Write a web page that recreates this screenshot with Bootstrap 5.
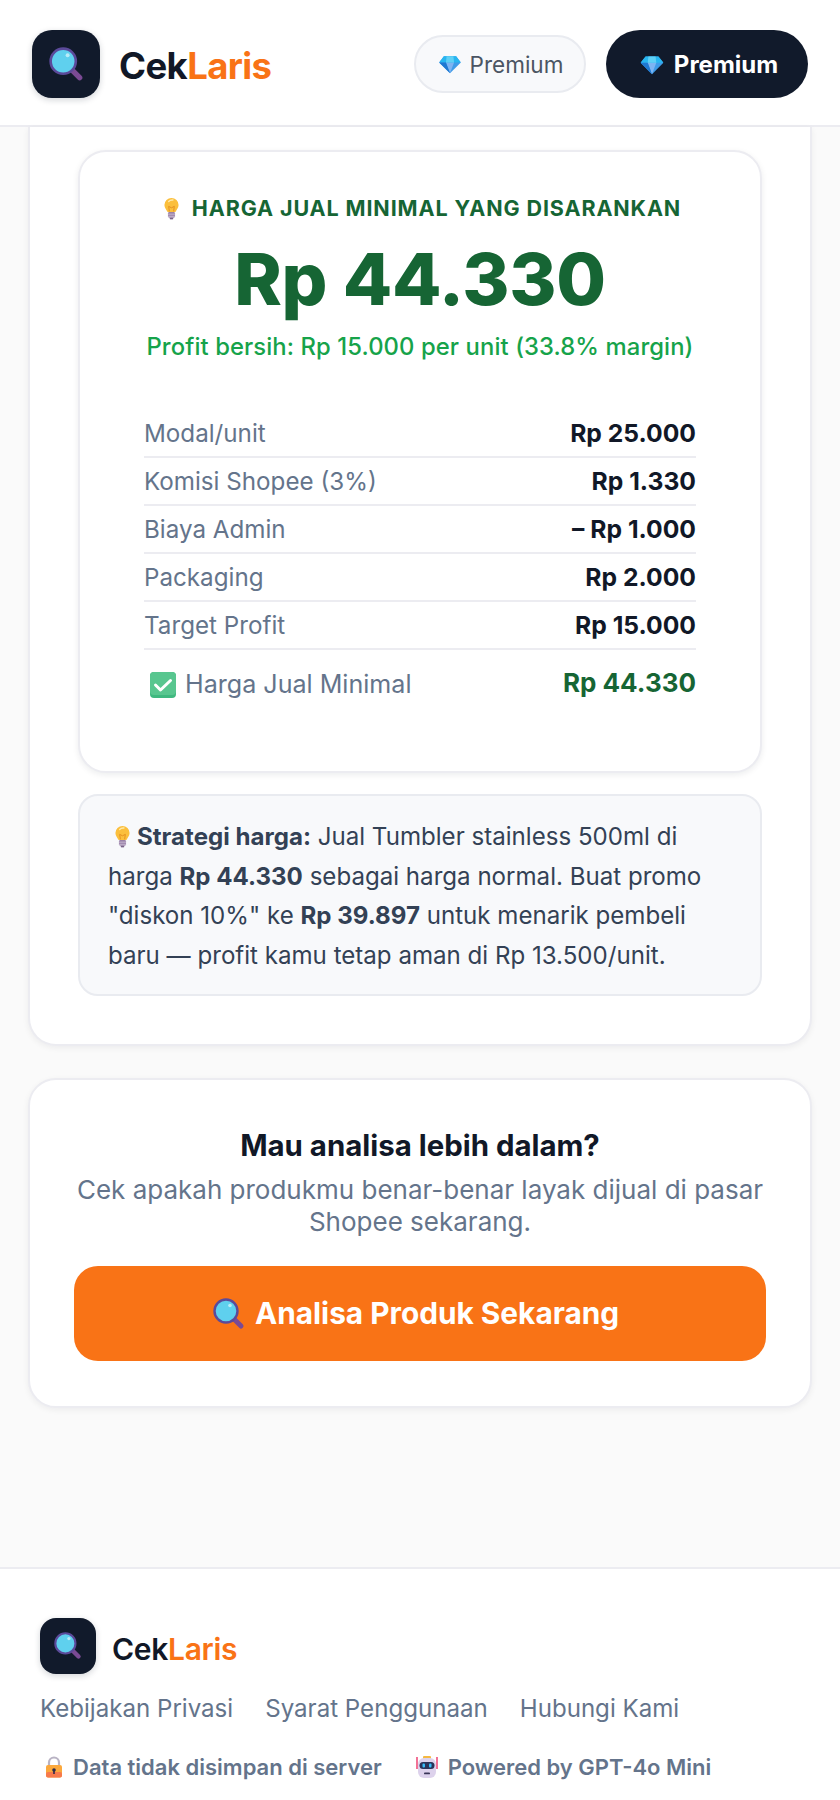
<!DOCTYPE html>
<html lang="id">
<head>
    <meta charset="UTF-8">
    <meta name="viewport" content="width=device-width, initial-scale=1.0">
    <title>CekLaris</title>
    <link href="https://cdn.jsdelivr.net/npm/bootstrap@5.3.0/dist/css/bootstrap.min.css" rel="stylesheet">
    <style>
        body { font-family: "Inter", "Noto Sans", sans-serif; background: #fafafa; color: #111827; height: 1800px; overflow: hidden; }
        .top-bar { height: 127px; background: #fff; border-bottom: 2px solid #ececf1; padding: 3px 32px 0; }
        .logo-box { width: 68px; height: 68px; border-radius: 20px; background: #111a2b; box-shadow: 0 2px 6px rgba(17,26,43,.18); }
        .logo-box.is-small { width: 56px; height: 56px; border-radius: 16px; }
        .brand-name { font-size: 36.5px; font-weight: 700; letter-spacing: -.6px; line-height: 1; padding: 4px 0 0 3px; }
        .brand-name.is-small { font-size: 30px; font-weight: 600; letter-spacing: -.3px; padding: 6px 0 0; }
        .brand-name span { color: #f97316; }
        .pill-light { width: 172px; height: 58px; border: 2px solid #e9ebf0; background: #f8f9fb; border-radius: 29px; color: #4b5563; font-size: 22.5px; gap: 9px; padding: 1px 0 0 2px; }
        .pill-dark { width: 202px; height: 68px; background: #111a2b; border-radius: 34px; color: #fff; font-size: 24px; font-weight: 700; gap: 10px; padding: 2px 0 0 4px; }
        .sheet { background: #fff; border: 2px solid #ececf1; border-radius: 28px; box-shadow: 0 2px 6px rgba(17,24,39,.06); }
        .sheet-result { margin: 0 28px; border-top: 0; border-top-left-radius: 0; border-top-right-radius: 0; height: 919px; padding: 23px 48px 0; }
        .result-box { height: 623px; background: #fff; border: 2px solid #ececf1; border-radius: 28px; box-shadow: 0 2px 6px rgba(17,24,39,.08); padding: 41px 64px 0; }
        .result-label { font-size: 21.5px; font-weight: 700; color: #166534; letter-spacing: .88px; line-height: 30px; gap: 12px; padding-left: 4px; }
        .result-price { font-size: 72px; font-weight: 800; color: #166534; line-height: 96px; margin-top: 8px; letter-spacing: -.3px; }
        .result-profit { font-size: 23.8px; font-weight: 500; color: #16a34a; line-height: 32px; margin: 4px 0 47px; letter-spacing: .1px; }
        .cost-row { height: 48px; border-bottom: 2px solid #ececf1; font-size: 24.2px; color: #64748b; padding-top: 2px; }
        .cost-row b { color: #111827; font-weight: 700; font-size: 24.7px; }
        .cost-total { height: 64px; font-size: 25.1px; color: #64748b; gap: 9px; padding: 5px 0 0 6px; }
        .cost-total b { color: #166534; font-size: 26px; font-weight: 700; margin-left: auto; margin-top: -4px; }
        .tip-box { margin-top: 21px; height: 202px; background: #f8f9fb; border: 2px solid #e9ebf0; border-radius: 20px; padding: 21px 28px; font-size: 24.1px; line-height: 39.6px; color: #334155; }
        .tip-box b { font-weight: 700; }
        .tip-box .emoji { margin: 0 6px; }
        .sheet-cta { margin: 32px 28px 0; height: 330px; padding: 46px 44px 0; text-align: center; }
        .cta-title { font-size: 29.4px; font-weight: 700; line-height: 40px; color: #111827; margin: 0; }
        .cta-text { font-size: 26px; line-height: 32px; color: #64748b; margin: 8px 0 28px; }
        .cta-btn { height: 95px; border-radius: 24px; background: #f97316; color: #fff; font-size: 29.8px; font-weight: 700; gap: 10px; border: 0; padding-left: 4px; }
        .cta-btn:hover { background: #f97316; color: #fff; }
        .page-foot { position: absolute; left: 0; right: 0; top: 1567px; bottom: 0; background: #fff; border-top: 2px solid #ececf1; padding: 49px 40px 0; }
        .foot-links { font-size: 24.1px; color: #64748b; gap: 32px; line-height: 32px; margin-top: 19px; }
        .foot-notes { font-size: 22px; font-weight: 600; color: #64748b; gap: 34px; line-height: 30px; margin-top: 27px; padding-left: 5px; }
        .foot-notes span { gap: 10px; }
        .foot-links a { color: inherit; text-decoration: none; }
        .emoji { flex: none; vertical-align: -3px; }
    </style>
</head>
<body>
    <svg width="0" height="0" class="position-absolute">
        <symbol id="ico-search" viewBox="0 0 32 32">
            <path d="M20 20l8 8" stroke="#7b4a94" stroke-width="5" stroke-linecap="round"/>
            <circle cx="13" cy="13" r="11.5" fill="#5fd0ee" stroke="#5b4a9a" stroke-width="2.4"/>
            <circle cx="17" cy="7.5" r="1.8" fill="#b9ecf8"/>
        </symbol>
        <symbol id="ico-gem" viewBox="0 0 32 28">
            <path d="M7 2h18l7 9-16 16L0 11z" fill="#3f9be8"/>
            <path d="M7 2h18l7 9H0z" fill="#27b6f0"/>
            <path d="M10 11h12l-6 16z" fill="#7eb4f2"/>
            <path d="M11 2h10l1 9H10z" fill="#5fd0f5"/>
            <path d="M0 11h10l6 16z" fill="#1f78d1"/>
        </symbol>
        <symbol id="ico-bulb" viewBox="0 0 24 32">
            <path d="M12 1a10 10 0 0 0-10 10c0 4.500 3 6.500 4.500 10h11c1.500-3.500 4.500-5.500 4.500-10a10 10 0 0 0-10-10z" fill="#fbbf3c"/>
            <path d="M8 6a7 7 0 0 1 6-2" stroke="#ffe9a8" stroke-width="2" fill="none" stroke-linecap="round"/>
            <path d="M9 20l-1-7 4 2 4-2-1 7" stroke="#e08a1e" stroke-width="1.200" fill="none"/>
            <rect x="7" y="21" width="10" height="8" rx="2" fill="#9a82a8"/>
            <path d="M7 24h10M7 27h10" stroke="#d8cbe0" stroke-width="1"/>
            <rect x="9.500" y="29" width="5" height="2.500" rx="1" fill="#7a6488"/>
        </symbol>
        <symbol id="ico-check" viewBox="0 0 26 26">
            <rect width="26" height="26" rx="4" fill="#3fb87f"/>
            <rect y="0" width="26" height="23" rx="4" fill="#58c68f"/>
            <path d="M5.500 13l5 5 10-9.500" stroke="#fff" stroke-width="3" fill="none" stroke-linecap="round" stroke-linejoin="round"/>
        </symbol>
        <symbol id="ico-lock" viewBox="0 0 18 22">
            <path d="M4 10V6.500a5 5 0 0 1 10 0V10" fill="none" stroke="#b9b3c4" stroke-width="2.200"/>
            <rect x="1" y="9" width="16" height="12.500" rx="2" fill="#fba83c"/>
            <rect x="1" y="16" width="16" height="5.500" rx="2" fill="#f7794b"/>
            <circle cx="9" cy="14" r="1.800" fill="#2e2a4a"/>
            <rect x="8.200" y="14" width="1.600" height="4" fill="#2e2a4a"/>
        </symbol>
        <symbol id="ico-robot" viewBox="0 0 22 24">
            <rect x="7" y="1" width="8" height="3" rx="1" fill="#f5b942"/>
            <path d="M1 2v12M21 2v12" stroke="#ef4f7c" stroke-width="1.600"/>
            <rect x="2" y="3" width="18" height="20" rx="6" fill="#ddd2ec"/>
            <rect x="3.500" y="7" width="15" height="7" rx="3.500" fill="#2a3358"/>
            <rect x="6.500" y="8.500" width="2.500" height="4" rx="1" fill="#38bdf8"/>
            <rect x="13" y="8.500" width="2.500" height="4" rx="1" fill="#38bdf8"/>
            <rect x="8" y="17.500" width="6" height="1.800" rx=".9" fill="#3a3558"/>
        </symbol>
    </svg>

    <!-- Header -->
    <header class="top-bar d-flex align-items-center">
        <div class="logo-box d-flex align-items-center justify-content-center">
            <svg width="35" height="35" viewBox="0 0 32 32"><use href="#ico-search"/></svg>
        </div>
        <div class="brand-name ms-3">Cek<span>Laris</span></div>
        <div class="ms-auto d-flex align-items-center gap-3">
            <a class="pill-light d-flex align-items-center justify-content-center text-decoration-none">
                <svg class="emoji" width="22" height="19" viewBox="0 0 32 28"><use href="#ico-gem"/></svg>Premium
            </a>
            <a class="pill-dark d-flex align-items-center justify-content-center ms-1 text-decoration-none">
                <svg class="emoji" width="24" height="20" viewBox="0 0 32 28"><use href="#ico-gem"/></svg>Premium
            </a>
        </div>
    </header>

    <main>
        <!-- Result -->
        <section class="sheet sheet-result">
            <div class="result-box">
                <div class="result-label d-flex align-items-center justify-content-center">
                    <svg class="emoji" width="17" height="23" viewBox="0 0 24 32"><use href="#ico-bulb"/></svg>
                    <span>HARGA JUAL MINIMAL YANG DISARANKAN</span>
                </div>
                <div class="result-price text-center">Rp 44.330</div>
                <div class="result-profit text-center text-nowrap">Profit bersih: Rp 15.000 per unit (33.8% margin)</div>

                <div class="cost-row d-flex justify-content-between align-items-center"><span>Modal/unit</span><b>Rp 25.000</b></div>
                <div class="cost-row d-flex justify-content-between align-items-center"><span>Komisi Shopee (3%)</span><b>Rp 1.330</b></div>
                <div class="cost-row d-flex justify-content-between align-items-center"><span>Biaya Admin</span><b>– Rp 1.000</b></div>
                <div class="cost-row d-flex justify-content-between align-items-center"><span>Packaging</span><b>Rp 2.000</b></div>
                <div class="cost-row d-flex justify-content-between align-items-center"><span>Target Profit</span><b>Rp 15.000</b></div>
                <div class="cost-total d-flex align-items-center">
                    <svg class="emoji" width="26" height="26" viewBox="0 0 26 26"><use href="#ico-check"/></svg>
                    <span>Harga Jual Minimal</span>
                    <b>Rp 44.330</b>
                </div>
            </div>

            <div class="tip-box">
                <svg class="emoji" width="17" height="23" viewBox="0 0 24 32"><use href="#ico-bulb"/></svg><b>Strategi harga:</b> Jual Tumbler stainless 500ml di harga <b>Rp 44.330</b> sebagai harga normal. Buat promo "diskon 10%" ke <b>Rp 39.897</b> untuk menarik pembeli baru — profit kamu tetap aman di Rp 13.500/unit.
            </div>
        </section>

        <!-- CTA -->
        <section class="sheet sheet-cta">
            <h2 class="cta-title">Mau analisa lebih dalam?</h2>
            <p class="cta-text">Cek apakah produkmu benar-benar layak dijual di pasar Shopee sekarang.</p>
            <a class="btn cta-btn d-flex align-items-center justify-content-center w-100">
                <svg class="emoji" width="32" height="32" viewBox="0 0 32 32"><use href="#ico-search"/></svg>
                Analisa Produk Sekarang
            </a>
        </section>
    </main>

    <!-- Footer -->
    <footer class="page-foot">
        <div class="d-flex align-items-center">
            <div class="logo-box is-small d-flex align-items-center justify-content-center">
                <svg width="28" height="28" viewBox="0 0 32 32"><use href="#ico-search"/></svg>
            </div>
            <div class="brand-name is-small ms-3">Cek<span>Laris</span></div>
        </div>
        <div class="foot-links d-flex">
            <a href="#">Kebijakan Privasi</a>
            <a href="#">Syarat Penggunaan</a>
            <a href="#">Hubungi Kami</a>
        </div>
        <div class="foot-notes d-flex">
            <span class="d-flex align-items-center"><svg class="emoji" width="18" height="22" viewBox="0 0 18 22"><use href="#ico-lock"/></svg>Data tidak disimpan di server</span>
            <span class="d-flex align-items-center"><svg class="emoji" width="22" height="24" viewBox="0 0 22 24"><use href="#ico-robot"/></svg>Powered by GPT-4o Mini</span>
        </div>
    </footer>
</body>
</html>
